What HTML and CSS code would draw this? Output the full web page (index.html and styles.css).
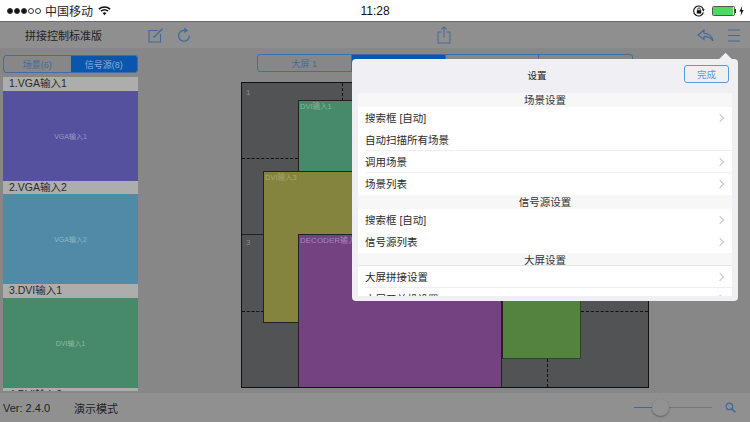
FILE: index.html
```html
<!DOCTYPE html>
<html lang="zh">
<head>
<meta charset="utf-8">
<title>拼接控制标准版</title>
<link rel="stylesheet" href="styles.css">
</head>
<body>
<div class="app">
  <header class="status">
    <div class="status-left">
      <span class="signal"><i class="dot on"></i><i class="dot on"></i><i class="dot on"></i><i class="dot"></i><i class="dot"></i></span>
      <span class="carrier">中国移动</span>
      <svg class="wifi" width="13" height="11" viewBox="0 0 14 11"><path d="M1 4 A9 9 0 0 1 13 4" fill="none" stroke="#111" stroke-width="1.6"/><path d="M3.2 6.2 A6 6 0 0 1 10.8 6.2" fill="none" stroke="#111" stroke-width="1.6"/><path d="M7 10.5 L4.9 8.2 A3.2 3.2 0 0 1 9.1 8.2 Z" fill="#111"/></svg>
    </div>
    <div class="clock">11:28</div>
    <div class="status-right">
      <svg width="12" height="12" viewBox="0 0 12 12"><path d="M10.4 7.5 A5 5 0 1 1 10.4 4.5" fill="none" stroke="#111" stroke-width="1.1"/><path d="M11.6 4 L10.6 6.4 L8.8 4.6 Z" fill="#111"/><rect x="3.8" y="5.2" width="4.4" height="3.4" fill="#111"/><path d="M4.8 5.2 V4 a1.2 1.2 0 0 1 2.4 0 V5.2" fill="none" stroke="#111" stroke-width=".8"/></svg>
      <span class="battery"><span class="battery-level"></span></span><span class="battery-tip"></span>
      <svg width="5" height="10" viewBox="0 0 5 10"><path d="M3.2 0 L0.4 5.6 H2.2 L1.6 10 L4.6 4 H2.7 Z" fill="#111"/></svg>
    </div>
  </header>

  <nav class="toolbar">
    <div class="app-title">拼接控制标准版</div>
    <svg class="tool-edit" width="16" height="15" viewBox="0 0 16 15"><path d="M10 2.5 H1 V14 H12.5 V6" fill="none" stroke="#3f6b9c" stroke-width="1.1"/><path d="M5.5 9.5 L14.5 .8" stroke="#3f6b9c" stroke-width="1.5"/></svg>
    <svg class="tool-refresh" width="14" height="16" viewBox="0 0 14 16"><path d="M8.6 3.6 A5.4 5.4 0 1 0 12.4 8.6" fill="none" stroke="#3f6b9c" stroke-width="1.3"/><path d="M7.4 .6 L11.2 3.6 L7.4 6 Z" fill="#3f6b9c"/></svg>
    <svg class="tool-share" width="14" height="18" viewBox="0 0 14 18"><path d="M4.5 6 H1 V17 H13 V6 H9.5 M7 11.5 V1 M4.4 3.4 L7 .8 L9.6 3.4" fill="none" stroke="#4a6f98" stroke-width="1.1"/></svg>
    <svg class="tool-back" width="17" height="13" viewBox="0 0 17 13"><path d="M7 1 L1 6 L7 10.5 V7.6 C11 7.4 14 8.6 16 12 C15.4 7.4 12 4.6 7 4.2 Z" fill="none" stroke="#3f6b9c" stroke-width="1.1"/></svg>
    <svg class="tool-menu" width="12" height="13" viewBox="0 0 12 13"><path d="M0 1 H12 M0 6.5 H12 M0 12 H12" stroke="#3f6b9c" stroke-width="1"/></svg>
  </nav>

  <div class="main">
    <aside class="sidebar">
      <div class="segment">
        <span class="seg-item">场景(6)</span>
        <span class="seg-item seg-active">信号源(8)</span>
      </div>
      <div class="source-list">
        <div class="source-label">1.VGA输入1</div>
        <div class="source-thumb thumb-vga1">VGA输入1</div>
        <div class="source-label">2.VGA输入2</div>
        <div class="source-thumb thumb-vga2">VGA输入2</div>
        <div class="source-label">3.DVI输入1</div>
        <div class="source-thumb thumb-dvi1">DVI输入1</div>
        <div class="source-label">4.DVI输入2</div>
      </div>
    </aside>

    <section class="stage">
      <div class="screen-tabs">
        <span class="screen-tab">大屏 1</span>
        <span class="screen-tab screen-tab-active">大屏 2</span>
        <span class="screen-tab">大屏 3</span>
        <span class="screen-tab">大屏 4</span>
      </div>
      <div class="canvas">
        <span class="cell-no cell-1">1</span>
        <span class="cell-no cell-3">3</span>
        <i class="line v-dash l1"></i>
        <i class="line h-dash l2"></i>
        <i class="line h-solid l3"></i>
        <i class="line h-dash l4"></i>
        <i class="line h-dash l5"></i>
        <i class="line v-dash l6"></i>
        <div class="win win-dvi1">DVI输入1</div>
        <div class="win win-dvi3">DVI输入3</div>
        <div class="win win-green"></div>
        <div class="win win-decoder">DECODER输入</div>
      </div>
    </section>
  </div>

  <footer class="footer">
    <span class="version">Ver: 2.4.0</span>
    <span class="mode">演示模式</span>
    <div class="slider"><span class="slider-fill"></span><span class="slider-thumb"></span></div>
    <svg class="zoom-icon" width="11" height="11" viewBox="0 0 11 11"><circle cx="4.4" cy="4.4" r="3.3" fill="none" stroke="#3f6b9c" stroke-width="1.2"/><path d="M6.9 6.9 L10.4 10.4" stroke="#3f6b9c" stroke-width="1.5"/></svg>
  </footer>

  <div class="popover">
    <span class="arrow"></span>
    <div class="pop-head">
      <span class="pop-title">设置</span>
      <span class="pop-done">完成</span>
    </div>
    <div class="pop-body">
      <div class="group-title">场景设置</div>
      <div class="row chev">搜索框 [自动]</div>
      <div class="row sep">自动扫描所有场景</div>
      <div class="row chev sep">调用场景</div>
      <div class="row chev">场景列表</div>
      <div class="group-title">信号源设置</div>
      <div class="row chev">搜索框 [自动]</div>
      <div class="row chev">信号源列表</div>
      <div class="group-title group-shadow">大屏设置</div>
      <div class="row chev sep">大屏拼接设置</div>
      <div class="row chev">大屏开关机设置</div>
    </div>
  </div>
</div>
</body>
</html>
```

FILE: styles.css
```css
* { box-sizing: border-box; }
html, body { margin: 0; padding: 0; }
body { width: 750px; height: 422px; overflow: hidden; font-family: "Liberation Sans", "Noto Sans CJK SC", sans-serif; color: #222; }
.app { position: relative; width: 750px; height: 422px; display: flex; flex-direction: column; background: #878787; }

.status { height: 21px; background: #fff; display: flex; align-items: center; justify-content: space-between; position: relative; padding: 0 6px 0 7px; flex: none; }
.status-left { display: flex; align-items: center; font-size: 12px; color: #222; }
.signal { display: flex; gap: 1px; margin-right: 4px; }
.dot { width: 6px; height: 6px; border-radius: 50%; border: .7px solid #333; }
.dot.on { background: #111; }
.carrier { margin-right: 5px; }
.clock { position: absolute; left: 0; right: 0; text-align: center; font-size: 12px; color: #111; }
.status-right { display: flex; align-items: center; }
.status-right svg:first-child { margin-right: 7px; }
.battery { width: 23px; height: 10px; border: .5px solid #555; padding: 0; display: block; background: #fff; border-radius: 1.5px; }
.battery-level { display: block; width: 20px; height: 100%; background: #4cd964; }
.battery-tip { width: 1.5px; height: 4px; background: #333; margin-right: 3px; }

.toolbar { height: 27px; flex: none; background: #8f8f8f; border-top: 1px solid #6c6c6c; position: relative; display: flex; align-items: center; }
.app-title { font-size: 11px; color: #222; margin-left: 25px; width: 123px; }
.tool-edit { margin-right: 13px; }
.tool-refresh { margin-right: 246px; }
.tool-share { margin-right: 246px; }
.tool-back { margin-right: 14px; }

.main { flex: 1; min-height: 0; display: flex; }
.sidebar { width: 139px; flex: none; padding: 7px 1px 0 3px; display: flex; flex-direction: column; overflow: hidden; }
.segment { height: 18px; flex: none; display: flex; border: 1px solid #3f6ea6; border-radius: 3px; overflow: hidden; font-size: 9px; margin-bottom: 4px; }
.seg-item { flex: 1; display: flex; align-items: center; justify-content: center; color: #3f6b9c; }
.seg-active { background: #0a55ae; color: #8fadd0; }
.source-list { flex: 1; min-height: 0; overflow: hidden; margin-bottom: 2px; }
.source-label { height: 13.5px; line-height: 12.5px; background: #adadad; font-size: 10.5px; padding-left: 6px; color: #2a2a2a; }
.source-thumb { height: 90px; display: flex; align-items: center; justify-content: center; font-size: 7px; color: #a8a8a8; }
.thumb-vga1 { background: #56519f; color: #9a97c0; }
.thumb-vga2 { background: #4f8ba6; color: #8fb6c6; }
.thumb-dvi1 { background: #478a6a; color: #8dbba3; }

.stage { flex: 1; min-width: 0; padding: 6px 0 0 102px; }
.screen-tabs { margin-left: 16px; width: 376px; height: 18px; display: flex; border: 1px solid #3f6ea6; border-radius: 3px; font-size: 9px; color: #3f6b9c; margin-bottom: 10px; overflow: hidden; }
.screen-tab { flex: 1; display: flex; align-items: center; justify-content: center; border-left: 1px solid #3f6ea6; }
.screen-tab:first-child { border-left: 0; }
.screen-tab-active { background: #0a55ae; color: #8fadd0; }

.canvas { position: relative; width: 408px; height: 306px; background: #525354; border: 1px solid #111; }
.cell-no { position: absolute; font-size: 8px; color: #8a8a8a; }
.cell-1 { left: 4px; top: 5px; }
.cell-3 { left: 4px; top: 155px; }
.line { position: absolute; display: block; }
.v-dash { width: 0; border-left: 1px dashed #111; }
.h-dash { height: 0; border-top: 1px dashed #111; }
.h-solid { height: 0; border-top: 1px solid #222; }
.l1 { left: 100px; top: 0; height: 18px; }
.l2 { left: 0; top: 75px; width: 56px; }
.l3 { left: 0; top: 151px; width: 22px; }
.l4 { left: 0; top: 228px; width: 22px; }
.l5 { left: 339px; top: 228px; width: 67px; }
.l6 { left: 305px; top: 276px; height: 28px; }

.win { position: absolute; font-size: 7.5px; line-height: 12px; padding-left: 1px; border: 1px solid #222; border-right: 0; border-bottom: 0; }
.win-dvi1 { left: 56px; top: 17px; width: 200px; height: 72px; background: #478a6a; color: #86b49d; }
.win-dvi3 { left: 21px; top: 88px; width: 200px; height: 152px; background: #85843f; color: #a5a570; border-bottom: 1px solid #222; }
.win-green { left: 260px; top: 100px; width: 79px; height: 176px; background: #53833f; border-right: 1px solid #2c4522; border-bottom: 1px solid #2c4522; }
.win-decoder { left: 56px; top: 151px; width: 204px; height: 153px; background: #744181; color: #a985b4; font-size: 8px; border-right: 1px solid #222; }

.footer { height: 29px; flex: none; background: #909090; position: relative; display: flex; align-items: center; font-size: 11px; color: #222; padding-left: 3px; }
.version { width: 71px; }
.slider { position: absolute; left: 634px; top: 14px; width: 78px; height: 1px; background: #777; }
.slider-fill { position: absolute; left: 0; top: 0; width: 18px; height: 1px; background: #3f6b9c; }
.slider-thumb { position: absolute; left: 18px; top: -8px; width: 17px; height: 17px; border-radius: 50%; background: #929292; box-shadow: 0 1px 2px rgba(0,0,0,.35); }
.zoom-icon { position: absolute; left: 725px; top: 9px; }

.popover { position: absolute; left: 352px; top: 59px; width: 386px; height: 242px; background: #efeff4; border-radius: 4px; display: flex; flex-direction: column; padding: 0 6px; }
.arrow { position: absolute; left: 368px; top: -4px; width: 11px; height: 11px; background: #efeff4; transform: rotate(45deg); }
.pop-head { position: relative; height: 34px; flex: none; display: flex; align-items: center; justify-content: center; padding: 0 16px 3px 0; }
.pop-title { font-size: 9.5px; color: #222; }
.pop-done { position: absolute; right: 3px; top: 6px; width: 45px; height: 18px; border: 1px solid #5b9ae0; border-radius: 3px; display: flex; align-items: center; justify-content: center; font-size: 9.5px; color: #5b9ae0; }
.pop-body { height: 203px; flex: none; overflow: hidden; }
.group-title { height: 13.75px; line-height: 15px; background: #f7f7f7; text-align: center; font-size: 10.5px; color: #333; }
.group-shadow { box-shadow: inset 0 -1px 0 #e6e6e6; }
.row { position: relative; height: 22px; line-height: 22px; background: #fff; padding-left: 7px; font-size: 10.5px; color: #2a2a2a; }
.sep::before { content: ""; position: absolute; left: 7px; right: 0; bottom: 0; height: 1px; background: #efefef; }
.chev::after { content: ""; position: absolute; right: 9px; top: 8px; width: 5px; height: 5px; border-top: 1px solid #c4c4c8; border-right: 1px solid #c4c4c8; transform: rotate(45deg); }
```
